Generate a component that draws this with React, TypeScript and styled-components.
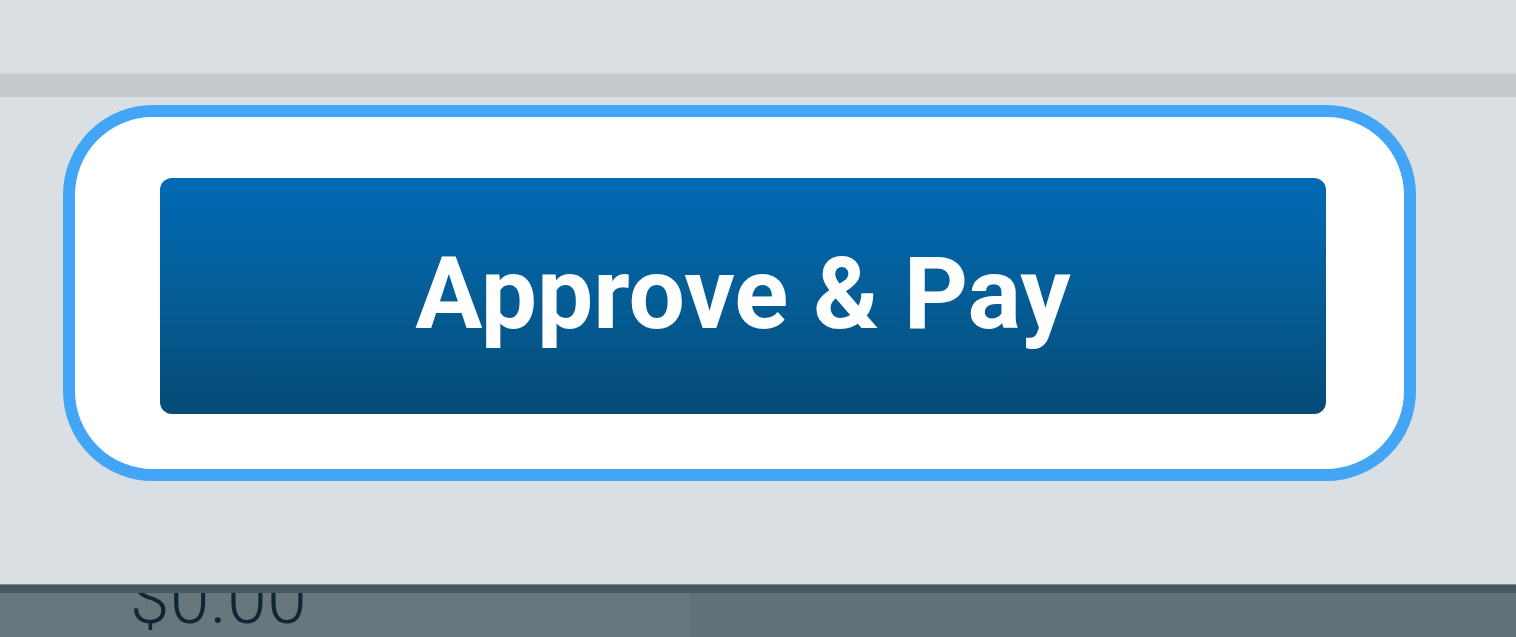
import React from "react";
import styled, { createGlobalStyle } from "styled-components";

const GlobalStyle = createGlobalStyle`
  html, body {
    margin: 0;
    padding: 0;
    background: #d9dfe2;
    font-family: Roboto, "Liberation Sans", sans-serif;
  }
  #root {
    height: 637px;
    overflow: hidden;
  }
`;

const Page = styled.div`
  display: flex;
  flex-direction: column;
  height: 637px;
  width: 1516px;
  background: #d9dfe2;
`;

const TopStrip = styled.div`
  height: 72px;
  background: #d9dfe2;
  border-bottom: 2px solid #d3d9dc;
`;

const Divider = styled.div`
  height: 23px;
  background: #c5cacd;
`;

const Panel = styled.div`
  height: 488px;
  padding: 8px 0 0 63px;
  box-sizing: border-box;
  background: #d9dfe2;
`;

const FocusRing = styled.div`
  display: inline-flex;
  box-sizing: border-box;
  width: 1353px;
  height: 376px;
  padding: 61px 78px 55px 85px;
  border: 12px solid #42a5f5;
  border-radius: 90px;
  background: #ffffff;
`;

const PayButton = styled.button`
  flex: 1;
  display: flex;
  align-items: center;
  justify-content: center;
  border: none;
  border-radius: 12px;
  background: linear-gradient(180deg, #026ab6 0%, #045d96 50%, #054b76 100%);
  color: #ffffff;
  font-family: Roboto, "Liberation Sans", sans-serif;
  font-weight: 700;
  font-size: 100px;
  line-height: 1;
  padding: 0 0 4px 0;
  cursor: pointer;
`;

const Footer = styled.div`
  flex: 1;
  display: flex;
  border-top: 8px solid #46575f;
  box-shadow: 0 -1px 0 #7d898f;
  background: #627078;
  overflow: hidden;
`;

const FooterCell = styled.div<{ $wide?: boolean; $light?: boolean }>`
  width: ${(p) => (p.$wide ? "690px" : "auto")};
  flex: ${(p) => (p.$wide ? "none" : 1)};
  background: ${(p) => (p.$light ? "#68767d" : "transparent")};
  overflow: hidden;
  padding-left: 130px;
  box-sizing: border-box;
`;

const Amount = styled.div`
  margin-top: -30px;
  font-family: Roboto, "Liberation Sans", sans-serif;
  font-weight: 300;
  font-size: 71px;
  letter-spacing: 0.5px;
  line-height: 1;
  color: #102632;
`;

export default function App() {
  return (
    <>
      <GlobalStyle />
      <Page>
        <TopStrip />
        <Divider />
        <Panel>
          <FocusRing>
            <PayButton type="button">Approve &amp; Pay</PayButton>
          </FocusRing>
        </Panel>
        <Footer>
          <FooterCell $wide $light>
            <Amount>$0.00</Amount>
          </FooterCell>
          <FooterCell />
        </Footer>
      </Page>
    </>
  );
}
